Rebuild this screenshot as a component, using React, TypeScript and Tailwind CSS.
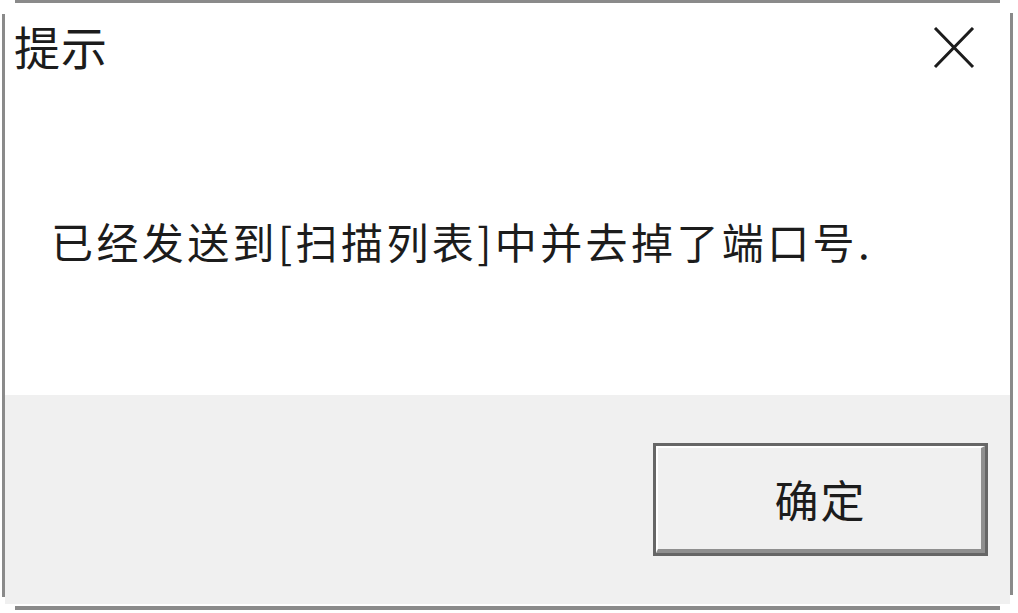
import { useState } from 'react';

const LINE = 'bg-[#8a8a8a]';

export default function App() {
  const [open, setOpen] = useState(true);
  return (
    <div className="w-[1018px] h-[613px] bg-white flex flex-col font-['Microsoft_YaHei','Noto_Sans_CJK_SC',sans-serif] text-[#1c1c1c]">
      <div className={`ml-[15px] w-[985px] h-[3px] shrink-0 ${LINE}`} />
      <div className="flex flex-1">
        <div className={`ml-[2px] w-[3px] mt-[11px] mb-[9px] ${LINE}`} />
        <div className="flex-1 flex flex-col">
          {/* title */}
          <div className="h-[392px] flex flex-col bg-white">
            <div className="flex items-start justify-between pl-[9px] pr-[34px] pt-[13px]">
              <h1 className="text-[46px] leading-[58px] tracking-[1px]">提示</h1>
              <button
                className="mt-[10px] w-[44px] h-[44px] flex items-center justify-center"
                onClick={() => setOpen(!open)}
              >
                <svg width="42" height="42" viewBox="0 0 42 42">
                  <path d="M2 1 L40 40 M40 1 L2 40" stroke="#1c1c1c" strokeWidth="3" />
                </svg>
              </button>
            </div>
            <p className="pl-[46px] mt-[139px] text-[42px] leading-[56px] tracking-[3.4px]">
              已经发送到[扫描列表]中并去掉了端口号.
            </p>
          </div>
          {/* footer */}
          <div className="flex-1 bg-[#f0f0f0] flex justify-end items-start pt-[48px] pr-[22px] mb-[2px]">
            <button className="w-[335px] h-[113px] border-[3px] border-[#666666] bg-[#f0f0f0]">
              <div className="w-full h-full border-t-2 border-l-2 border-white border-b-[4px] border-r-[4px] border-b-[#8f8f8f] border-r-[#8f8f8f] flex items-center justify-center text-[44px] tracking-[2px] pl-[2px]">
                确定
              </div>
            </button>
          </div>
        </div>
        <div className={`w-[3px] mt-[10px] mb-[11px] mr-[5px] ${LINE}`} />
      </div>
      <div className={`ml-[15px] w-[985px] h-[4px] mb-[3px] shrink-0 ${LINE}`} />
    </div>
  );
}
